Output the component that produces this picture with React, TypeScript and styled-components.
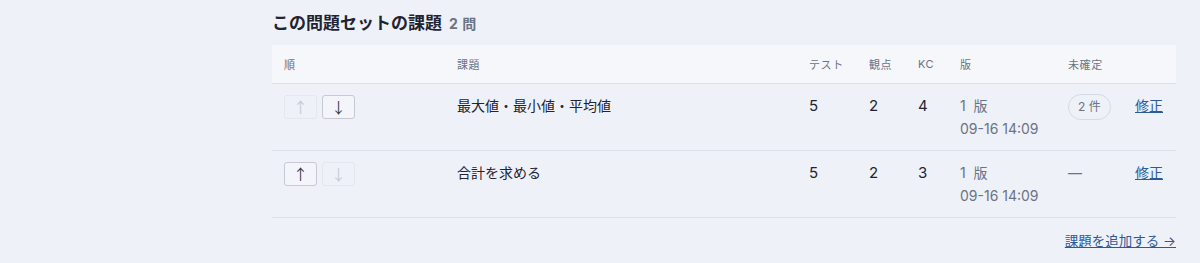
import * as React from "react";
import styled, { createGlobalStyle } from "styled-components";

const Global = createGlobalStyle`
  body {
    margin: 0;
    background: #eef1f8;
    font-family: Inter, "Noto Sans CJK JP", sans-serif;
    color: #1f2430;
  }
`;

const Page = styled.div`
  padding: 11px 24px 0 272px;
  height: 263px;
  box-sizing: border-box;
`;

const Title = styled.h3`
  margin: 0 0 9px 0;
  font-size: 17px;
  font-weight: 700;
  line-height: 25px;
  display: flex;
  align-items: baseline;
  gap: 7px;
`;

const Count = styled.span`
  font-size: 14px;
  font-weight: 700;
  color: #6b7385;
  letter-spacing: 0.5px;
`;

const Table = styled.table`
  width: 904px;
  border-collapse: collapse;
  table-layout: fixed;
`;

const Th = styled.th<{ $w: number }>`
  width: ${(p) => p.$w}px;
  text-align: left;
  font-size: 11px;
  letter-spacing: 0.6px;
  font-weight: 400;
  color: #6b7385;
  background: #f6f7fb;
  height: 38px;
  padding: 0 12px;
  box-sizing: border-box;
  border-bottom: 1px solid #dde2ea;
`;

const Td = styled.td<{ $muted?: boolean }>`
  vertical-align: top;
  padding: 10px 12px;
  font-size: 14px;
  line-height: 23px;
  color: ${(p) => (p.$muted ? "#6b7385" : "#1f2430")};
  border-bottom: 1px solid #dde2ea;
  white-space: nowrap;
`;

const NumTd = styled(Td)`
  font-size: 15px;
`;

const Arrows = styled.div`
  display: flex;
  gap: 5px;
  padding-top: 1px;
`;

const ArrowBtn = styled.button<{ $off?: boolean }>`
  width: 33px;
  height: 24px;
  padding: 0;
  border-radius: 3px;
  border: 1px solid ${(p) => (p.$off ? "#e3e7ee" : "#c4c9d3")};
  background: ${(p) => (p.$off ? "#eef1f8" : "#f3f5fa")};
  color: ${(p) => (p.$off ? "#c5cad4" : "#3a3f4a")};
  font-size: 15px;
  line-height: 22px;
  font-family: "Noto Sans CJK JP", sans-serif;
  cursor: ${(p) => (p.$off ? "default" : "pointer")};
`;

const Pill = styled.span`
  display: inline-block;
  border: 1px solid #d6dae3;
  border-radius: 13px;
  padding: 0 9px;
  height: 24px;
  line-height: 24px;
  font-size: 12px;
  color: #6b7385;
`;

const Link = styled.a`
  color: #2c5a98;
  text-decoration: underline;
  font-size: 14px;
  cursor: pointer;
`;

const Footer = styled.div`
  width: 904px;
  display: flex;
  justify-content: flex-end;
  padding-top: 12px;
`;

const FooterLink = styled(Link)`
  font-size: 13.5px;
`;

type Row = {
  title: string;
  tests: number;
  views: number;
  kc: number;
  pending: number | null;
  canUp: boolean;
  canDown: boolean;
};

const rows: Row[] = [
  { title: "最大値・最小値・平均値", tests: 5, views: 2, kc: 4, pending: 2, canUp: false, canDown: true },
  { title: "合計を求める", tests: 5, views: 2, kc: 3, pending: null, canUp: true, canDown: false },
];

export default function App() {
  return (
    <Page>
      <Global />
      <Title>
        この問題セットの課題 <Count>2 問</Count>
      </Title>
      <Table>
        <thead>
          <tr>
            <Th $w={173}>順</Th>
            <Th $w={352}>課題</Th>
            <Th $w={60}>テスト</Th>
            <Th $w={49}>観点</Th>
            <Th $w={42}>KC</Th>
            <Th $w={108}>版</Th>
            <Th $w={67}>未確定</Th>
            <Th $w={53}></Th>
          </tr>
        </thead>
        <tbody>
          {rows.map((r) => (
            <tr key={r.title}>
              <Td>
                <Arrows>
                  <ArrowBtn $off={!r.canUp}>↑</ArrowBtn>
                  <ArrowBtn $off={!r.canDown}>↓</ArrowBtn>
                </Arrows>
              </Td>
              <Td>{r.title}</Td>
              <NumTd>{r.tests}</NumTd>
              <NumTd>{r.views}</NumTd>
              <NumTd>{r.kc}</NumTd>
              <Td $muted>
                1&nbsp; 版
                <br />
                09-16 14:09
              </Td>
              <Td $muted>{r.pending ? <Pill>{r.pending} 件</Pill> : "—"}</Td>
              <Td>
                <Link>修正</Link>
              </Td>
            </tr>
          ))}
        </tbody>
      </Table>
      <Footer>
        <FooterLink>課題を追加する →</FooterLink>
      </Footer>
    </Page>
  );
}
